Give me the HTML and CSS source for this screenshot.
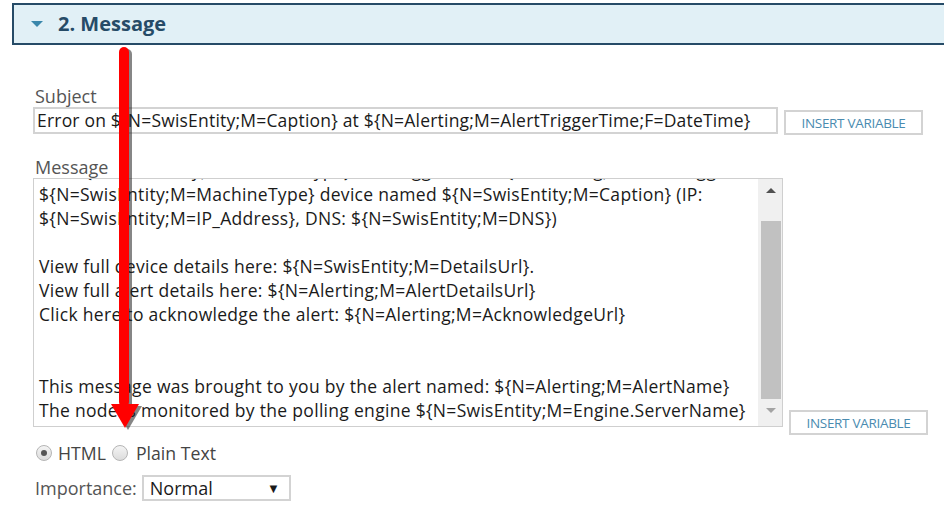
FILE: index.html
```html
<!DOCTYPE html>
<html lang="en">
  <head>
    <meta charset="UTF-8" />
    <meta name="viewport" content="width=device-width, initial-scale=1.0" />
    <title>Message</title>
    <link rel="stylesheet" href="styles.css">
  </head>
  <body>
    <div class="section-header">
      <span class="toggle"></span>
      <h2>2. Message</h2>
    </div>

    <form class="message-form">
      <label class="field-label">Subject</label>
      <div class="field-row subject-row">
        <div class="text-input">Error on ${N=SwisEntity;M=Caption} at ${N=Alerting;M=AlertTriggerTime;F=DateTime}</div>
        <button type="button" class="insert-btn">INSERT VARIABLE</button>
      </div>

      <label class="field-label message-label">Message</label>
      <div class="field-row message-row">
        <div class="text-area">
          <div class="text-lines">
            <p class="cut">The ${N=SwisEntity;M=MachineType} was triggered at ${N=Alerting;M=AlertTriggerTime;F=DateTime} for the</p>
            <p>${N=SwisEntity;M=MachineType} device named ${N=SwisEntity;M=Caption} (IP:</p>
            <p>${N=SwisEntity;M=IP_Address}, DNS: ${N=SwisEntity;M=DNS})</p>
            <p>&nbsp;</p>
            <p>View full device details here: ${N=SwisEntity;M=DetailsUrl}.</p>
            <p>View full alert details here: ${N=Alerting;M=AlertDetailsUrl}</p>
            <p>Click here to acknowledge the alert: ${N=Alerting;M=AcknowledgeUrl}</p>
            <p>&nbsp;</p>
            <p>&nbsp;</p>
            <p>This message was brought to you by the alert named: ${N=Alerting;M=AlertName}</p>
            <p>The node is monitored by the polling engine ${N=SwisEntity;M=Engine.ServerName}</p>
          </div>
          <div class="scrollbar">
            <span class="arrow up"></span>
            <span class="thumb"></span>
            <span class="arrow down"></span>
          </div>
        </div>
        <button type="button" class="insert-btn insert-btn-low">INSERT VARIABLE</button>
      </div>

      <div class="format-row">
        <label class="radio"><span class="dot checked"></span>HTML</label>
        <label class="radio"><span class="dot"></span>Plain Text</label>
      </div>

      <div class="importance-row">
        <label>Importance:</label>
        <div class="select-box"><span>Normal</span><span class="caret">&#9660;</span></div>
      </div>
    </form>

    <!-- annotation arrow drawn over the screenshot -->
    <svg class="red-arrow" width="60" height="400" viewBox="100 40 60 400">
      <g fill="#222" opacity="0.55">
        <rect x="122" y="49" width="10" height="360" rx="5" />
        <polygon points="114,406 142,406 128,430" />
      </g>
      <g fill="#ff0000">
        <rect x="119" y="47" width="10" height="360" rx="5" />
        <polygon points="111,404 139,404 125,428" />
      </g>
    </svg>
  </body>
</html>
```

FILE: styles.css
```css
* {
  box-sizing: border-box;
  margin: 0;
  padding: 0;
}

body {
  font-family: "Open Sans", Arial, sans-serif;
  color: #222;
  background: white;
  overflow: hidden;
  position: relative;
}

.section-header {
  display: flex;
  align-items: center;
  height: 42px;
  margin: 3px -20px 0 12px;
  border: 2px solid #264b67;
  background-color: #e1f0f6;
}
.toggle {
  width: 0;
  height: 0;
  margin-left: 17px;
  margin-right: 16px;
  border-left: 6px solid transparent;
  border-right: 6px solid transparent;
  border-top: 6px solid #3a87ab;
}
.section-header h2 {
  font-size: 20px;
  font-weight: 700;
  color: #264b67;
  line-height: 1;
  margin-top: -1px;
  margin-left: -1px;
}

.message-form {
  padding-left: 33px;
}
.field-label {
  display: block;
  font-size: 18px;
  color: #555;
  line-height: 22px;
  margin-left: 2px;
}
.message-form > .field-label:first-child {
  margin-top: 40px;
}
.field-row {
  display: flex;
  align-items: flex-end;
}
.text-input {
  width: 745px;
  height: 27px;
  border: 2px solid #d3d3d3;
  font-size: 17.5px;
  letter-spacing: 0.2px;
  line-height: 23px;
  padding-left: 2px;
  color: #1a1a1a;
  white-space: nowrap;
  overflow: hidden;
}
.insert-btn {
  width: 139px;
  height: 25px;
  margin-left: 6px;
  margin-bottom: -1px;
  border: 2px solid #d3d3d3;
  background: white;
  color: #4a8bb0;
  font-family: "Open Sans", Arial, sans-serif;
  font-size: 13.5px;
  letter-spacing: -0.3px;
}
.insert-btn-low {
  margin-left: 6px;
  margin-bottom: -8px;
}

.message-label {
  margin-top: 22px;
}
.text-area {
  width: 750px;
  height: 249px;
  border: 1px solid #cfcfcf;
  display: flex;
  overflow: hidden;
}
.text-lines {
  flex: 1;
  padding-left: 5px;
  font-size: 17.5px;
  letter-spacing: 0.3px;
  line-height: 24px;
  color: #1a1a1a;
  white-space: nowrap;
  overflow: hidden;
}
.text-lines .cut {
  margin-top: -21px;
}
.scrollbar {
  width: 24px;
  background-color: #f0f0f0;
  display: flex;
  flex-direction: column;
  align-items: center;
  padding: 0 1px 0 3px;
}
.arrow {
  width: 0;
  height: 0;
  border-left: 5px solid transparent;
  border-right: 5px solid transparent;
}
.arrow.up {
  margin-top: 9px;
  border-bottom: 5px solid #505050;
}
.arrow.down {
  margin-top: 9px;
  border-top: 5px solid #a3a3a3;
}
.thumb {
  width: 100%;
  height: 178px;
  margin-top: 28px;
  background-color: #c1c1c1;
}

.format-row {
  display: flex;
  align-items: center;
  margin-top: 14px;
  margin-left: 3px;
  font-size: 17.7px;
  color: #444;
}
.radio {
  display: flex;
  align-items: center;
}
.dot {
  width: 16px;
  height: 16px;
  border-radius: 50%;
  border: 1px solid #b5b5b5;
  background: linear-gradient(#f4f4f4, #dcdcdc);
  margin-right: 6px;
  position: relative;
}
.dot.checked::after {
  content: "";
  position: absolute;
  left: 4px;
  top: 4px;
  width: 6px;
  height: 6px;
  border-radius: 50%;
  background-color: #555;
}
.radio + .radio .dot {
  margin-left: 6px;
  margin-right: 8px;
}

.importance-row {
  display: flex;
  align-items: center;
  margin-top: 10px;
  margin-left: 2px;
  font-size: 18px;
  color: #555;
}
.select-box {
  display: flex;
  justify-content: space-between;
  align-items: center;
  width: 149px;
  height: 26px;
  margin-left: 5px;
  border: 2px solid #d3d3d3;
  padding: 0 9px 0 6px;
  color: #1a1a1a;
}
.caret {
  font-size: 13px;
}

.red-arrow {
  position: absolute;
  left: 100px;
  top: 40px;
}
```
